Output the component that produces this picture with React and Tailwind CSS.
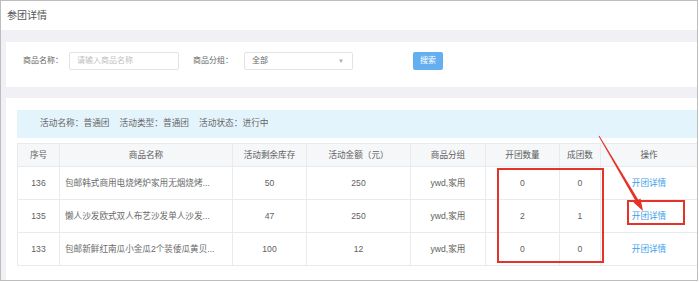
const rows = [
  { id: 136, name: "包邮韩式商用电烧烤炉家用无烟烧烤...", stock: 50, price: 250, group: "ywd,家用", open: 0, done: 0 },
  { id: 135, name: "懒人沙发欧式双人布艺沙发单人沙发...", stock: 47, price: 250, group: "ywd,家用", open: 2, done: 1 },
  { id: 133, name: "包邮新鲜红南瓜小金瓜2个装倭瓜黄贝...", stock: 100, price: 12, group: "ywd,家用", open: 0, done: 0 },
];

const font = { fontFamily: '"Liberation Sans", "Noto Sans CJK SC", sans-serif' };

function App() {
  return (
    <div className="w-[699px] h-[282px] bg-white overflow-hidden" style={font}>
      <div className="relative w-[698px] h-[281px] border border-[#bdbdbd] flex flex-col overflow-hidden">
        {/* title */}
        <div className="h-[29px] shrink-0 pl-[6px] flex items-center text-[10px] text-[#555]">参团详情</div>

        <div className="flex-1 bg-[#f0f0f5] pl-[5px] pt-[12px] flex flex-col gap-[11px]">
          {/* search card */}
          <div className="h-[45px] shrink-0 bg-white pl-[17px] pt-[10px]">
            <div className="flex items-center h-[18px] text-[8px] text-[#666]">
              <span className="w-[46px]">商品名称：</span>
              <div className="w-[110px] h-[18px] border border-[#e3e3e3] rounded-[2px] flex items-center pl-[7px] text-[#c0c0c0]">请输入商品名称</div>
              <span className="w-[51px] ml-[14px]">商品分组：</span>
              <div className="w-[109px] h-[18px] border border-[#e3e3e3] rounded-[2px] flex items-center justify-between pl-[7px] pr-[8px]">
                <span>全部</span>
                <span className="text-[6px] text-[#aaa]">▼</span>
              </div>
              <div className="ml-[60px] w-[30px] h-[18px] rounded-[2px] bg-[#65aff0] text-white flex items-center justify-center">搜索</div>
            </div>
          </div>

          {/* list card */}
          <div className="flex-1 bg-white pl-[11px] pt-[12px]">
            <div className="h-[28px] bg-[#e4f4fd] pl-[23px] flex items-center gap-[10px] text-[8.7px] text-[#666]">
              <span>活动名称：普通团</span>
              <span>活动类型：普通团</span>
              <span>活动状态：进行中</span>
            </div>
            <table className="mt-[5px] w-[680px] table-fixed border-collapse text-[8.6px] text-[#606060]">
              <colgroup>
                <col className="w-[42px]" />
                <col className="w-[173px]" />
                <col className="w-[74px]" />
                <col className="w-[104px]" />
                <col className="w-[75px]" />
                <col className="w-[74px]" />
                <col className="w-[41px]" />
                <col className="w-[97px]" />
              </colgroup>
              <thead>
                <tr className="h-[23px] bg-[#f6f7f9]">
                  {["序号", "商品名称", "活动剩余库存", "活动金额（元）", "商品分组", "开团数量", "成团数", "操作"].map((h) => (
                    <th key={h} className="border border-[#e8eaee] font-normal text-center p-0">{h}</th>
                  ))}
                </tr>
              </thead>
              <tbody>
                {rows.map((r) => (
                  <tr key={r.id} className="h-[33px]">
                    <td className="border border-[#e8eaee] text-center p-0">{r.id}</td>
                    <td className="border border-[#e8eaee] pl-[5px] pr-0 text-[#6a6a6a] whitespace-nowrap overflow-hidden">{r.name}</td>
                    <td className="border border-[#e8eaee] text-center p-0">{r.stock}</td>
                    <td className="border border-[#e8eaee] text-center p-0">{r.price}</td>
                    <td className="border border-[#e8eaee] text-center p-0">{r.group}</td>
                    <td className="border border-[#e8eaee] text-center p-0">{r.open}</td>
                    <td className="border border-[#e8eaee] text-center p-0">{r.done}</td>
                    <td className="border border-[#e8eaee] text-center p-0 text-[#3d9ee8]">开团详情</td>
                  </tr>
                ))}
              </tbody>
            </table>
          </div>
        </div>

        {/* red annotations */}
        <div className="absolute left-[496px] top-[167px] w-[107px] h-[95px] border-2 border-[#e6332a]" />
        <div className="absolute left-[626px] top-[199px] w-[58px] h-[25px] border-2 border-[#e6332a]" />
        <svg className="absolute left-0 top-0" width="698" height="281" viewBox="-1 -1 698 281">
          <polygon
            fill="#e6332a"
            points="597.4,133.75 636.3,197.85 638.5,196.6 641,209 631.5,200.6 633.7,199.35 596.6,134.25"
          />
        </svg>
      </div>
    </div>
  );
}

export default App;
